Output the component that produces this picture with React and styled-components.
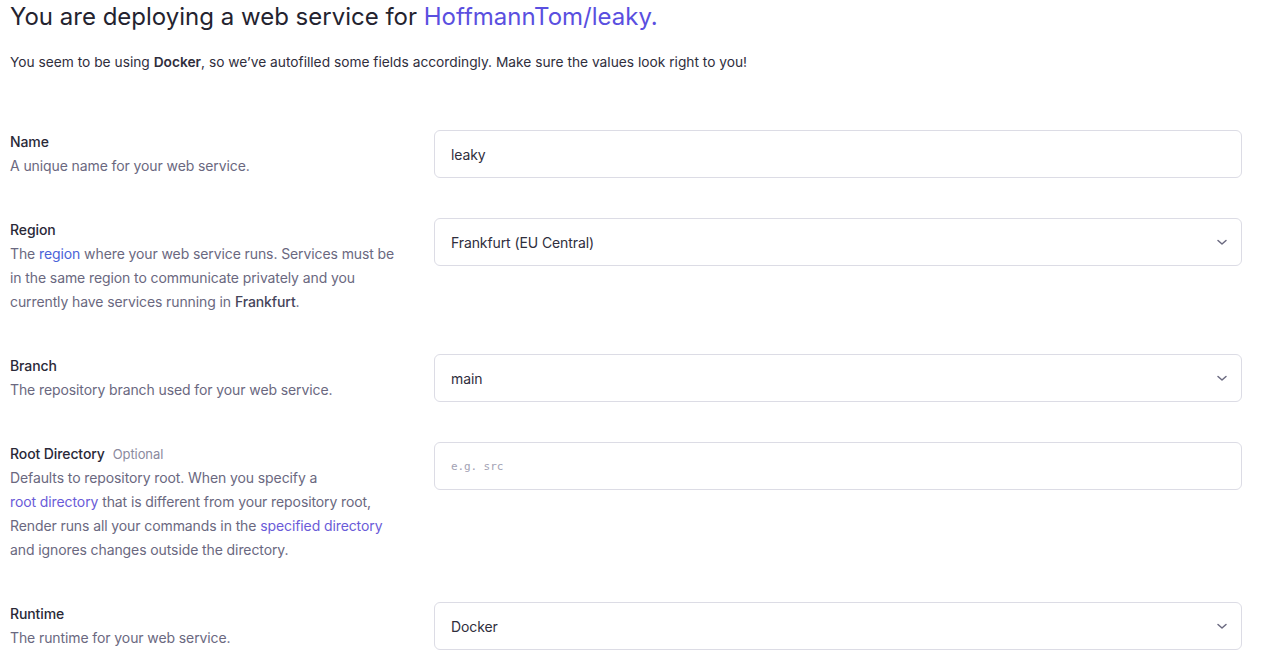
import React from 'react';
import styled, { createGlobalStyle } from 'styled-components';

const GlobalStyle = createGlobalStyle`
  body {
    margin: 0;
    background: #fff;
    font-family: Inter, "Noto Sans", sans-serif;
    color: #2a2938;
  }
`;

const Page = styled.main`
  padding: 1px 22px 40px 10px;
`;

const Heading = styled.h1`
  margin: 0;
  font-size: 24px;
  line-height: 32px;
  font-weight: 400;
  color: #24232f;
`;

const Accent = styled.span`
  color: #5a4fe0;
`;

const Intro = styled.p`
  margin: 17px 0 56px;
  font-size: 13.75px;
  line-height: 24px;
  color: #2f2e3d;

  b {
    font-weight: 600;
  }
`;

const Form = styled.div`
  display: flex;
  flex-direction: column;
  gap: 40px;
`;

const Row = styled.div`
  display: grid;
  grid-template-columns: 392px 1fr;
  column-gap: 32px;
  align-items: start;
`;

const Info = styled.div`
  font-size: 14px;
  line-height: 24px;
  letter-spacing: -0.1px;
`;

const Label = styled.div`
  color: #2a2938;
  font-weight: 500;
`;

const Optional = styled.span`
  margin-left: 8px;
  font-size: 13px;
  font-weight: 400;
  color: #8b8a9e;
`;

const Desc = styled.div`
  color: #6a6880;

  b {
    font-weight: 500;
    color: #45445a;
  }
`;

const Link = styled.a`
  color: ${p => (p.$tone === 'blue' ? '#4a63d8' : '#6a5bd8')};
  text-decoration: none;
  white-space: nowrap;
`;

const Field = styled.div`
  position: relative;
  height: 48px;
  box-sizing: border-box;
  border: 1px solid #dcdce5;
  border-radius: 6px;
  display: flex;
  align-items: center;
  padding: 0 16px;
  font-size: 14px;
  letter-spacing: -0.1px;
  color: #2f2e3d;
`;

const Placeholder = styled.span`
  font-family: "DejaVu Sans Mono", "Liberation Mono", monospace;
  font-size: 11px;
  color: #a3a2b4;
`;

const Chevron = styled.svg`
  position: absolute;
  right: 13px;
  top: 50%;
  margin-top: -6px;
`;

function Select({ children }) {
  return (
    <Field>
      {children}
      <Chevron width="12" height="12" viewBox="0 0 12 12" fill="none">
        <path d="M2 4.5 L6 8 L10 4.5" stroke="#6b6a80" strokeWidth="1.5" strokeLinecap="round" strokeLinejoin="round" />
      </Chevron>
    </Field>
  );
}

export default function App() {
  return (
    <>
      <GlobalStyle />
      <Page>
        <Heading>
          You are deploying a web service for <Accent>HoffmannTom/leaky.</Accent>
        </Heading>
        <Intro>
          You seem to be using <b>Docker</b>, so we’ve autofilled some fields accordingly. Make sure the values look right to you!
        </Intro>
        <Form>
          <Row>
            <Info>
              <Label>Name</Label>
              <Desc>A unique name for your web service.</Desc>
            </Info>
            <Field>leaky</Field>
          </Row>
          <Row>
            <Info>
              <Label>Region</Label>
              <Desc>
                The <Link $tone="blue" href="#">region</Link> where your web service runs. Services must be in the same region to communicate privately and you currently have services running in <b>Frankfurt</b>.
              </Desc>
            </Info>
            <Select>Frankfurt (EU Central)</Select>
          </Row>
          <Row>
            <Info>
              <Label>Branch</Label>
              <Desc>The repository branch used for your web service.</Desc>
            </Info>
            <Select>main</Select>
          </Row>
          <Row>
            <Info>
              <Label>
                Root Directory<Optional>Optional</Optional>
              </Label>
              <Desc>
                Defaults to repository root. When you specify a <Link href="#">root directory</Link> that is different from your repository root, Render runs all your commands in the <Link href="#">specified directory</Link> and ignores changes outside the directory.
              </Desc>
            </Info>
            <Field>
              <Placeholder>e.g. src</Placeholder>
            </Field>
          </Row>
          <Row>
            <Info>
              <Label>Runtime</Label>
              <Desc>The runtime for your web service.</Desc>
            </Info>
            <Select>Docker</Select>
          </Row>
        </Form>
      </Page>
    </>
  );
}
